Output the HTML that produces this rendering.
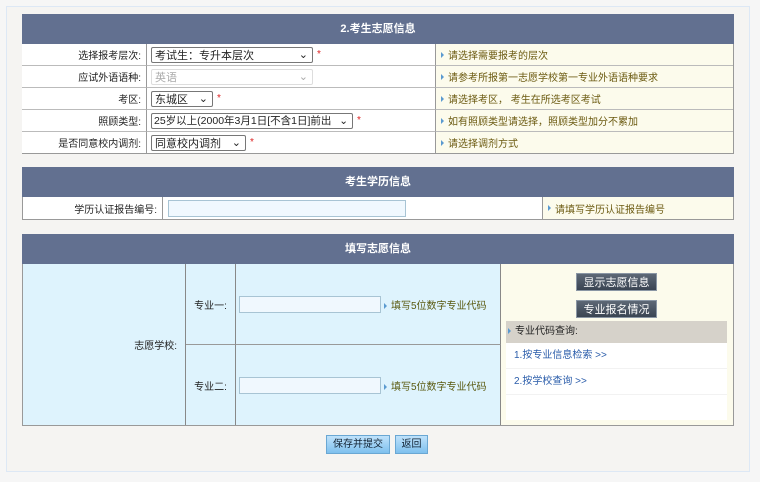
<!DOCTYPE html>
<html><head><meta charset="utf-8"><style>
*{margin:0;padding:0;box-sizing:border-box}
body{width:760px;height:482px;background:#f6f6f6;font-family:"Liberation Sans","Noto Sans CJK SC",sans-serif;font-size:10px;color:#222;position:relative;overflow:hidden}
.a{position:absolute}
.panel{left:6px;top:6px;width:744px;height:466px;background:#f5f4f2;border:1px solid #dde8f5}
.hd{background:#627090;color:#fff;font-weight:bold;font-size:11px;text-align:center}
.cell{border-right:1px solid #999;border-bottom:1px solid #bbb;display:flex;align-items:center;white-space:nowrap}
.lab{justify-content:flex-end;padding-right:5px;background:#fff}
.tip{background:#fcfbec;color:#6b5a10;padding-left:5px}
.tip:before{content:"";display:inline-block;width:0;height:0;border-left:3px solid #5a9ad0;border-top:3px solid transparent;border-bottom:3px solid transparent;margin-right:4px}
.sel{height:16px;border:1px solid #777;background:#fff;font-size:11px;padding-left:3px;display:flex;align-items:center;justify-content:space-between;padding-right:4px;border-radius:2px;white-space:nowrap;overflow:hidden}
.sel span:first-child{overflow:hidden}
.star{color:#d22;margin-left:4px}
.inp{background:#f0f8fe;border:1px solid #a8c4d4}
.gbtn{background:linear-gradient(#5d6876,#3a4452);color:#fff;font-size:11px;text-align:center;line-height:18px;border:1px solid #8a96a4}
.bbtn{background:linear-gradient(#bfe2fb,#7ec0ee);border:1px solid #6aa7d3;font-size:10px;text-align:center;line-height:18px;color:#123}
</style></head><body>
<div class="a panel"></div>
<div class="a" style="left:22px;top:14px;width:712px;height:140px;border:1px solid #999;border-top:none;background:#fff"></div>
<div class="a hd" style="left:22px;top:14px;width:712px;height:30px;line-height:30px">2.考生志愿信息</div>
<div class="a" style="left:22px;top:44px;width:711px;font-size:10px">
 <div style="display:flex;height:22px"><div class="cell lab" style="width:125px">选择报考层次:</div><div class="cell" style="width:289px;padding-left:4px;background:#fff"><div class="sel" style="width:162px"><span>考试生：专升本层次</span><span>⌄</span></div><span class="star">*</span></div><div class="cell tip" style="width:297px;border-right:none">请选择需要报考的层次</div></div>
 <div style="display:flex;height:22px"><div class="cell lab" style="width:125px">应试外语语种:</div><div class="cell" style="width:289px;padding-left:4px;background:#fff"><div class="sel" style="width:162px;color:#aaa;border-color:#ddd"><span>英语</span><span>⌄</span></div></div><div class="cell tip" style="width:297px;border-right:none">请参考所报第一志愿学校第一专业外语语种要求</div></div>
 <div style="display:flex;height:22px"><div class="cell lab" style="width:125px">考区:</div><div class="cell" style="width:289px;padding-left:4px;background:#fff"><div class="sel" style="width:62px"><span>东城区</span><span>⌄</span></div><span class="star">*</span></div><div class="cell tip" style="width:297px;border-right:none">请选择考区， 考生在所选考区考试</div></div>
 <div style="display:flex;height:22px"><div class="cell lab" style="width:125px">照顾类型:</div><div class="cell" style="width:289px;padding-left:4px;background:#fff"><div class="sel" style="width:202px;font-size:10.5px;padding-left:2px"><span>25岁以上(2000年3月1日[不含1日]前出</span><span>⌄</span></div><span class="star">*</span></div><div class="cell tip" style="width:297px;border-right:none">如有照顾类型请选择，照顾类型加分不累加</div></div>
 <div style="display:flex;height:21px"><div class="cell lab" style="width:125px;border-bottom:none">是否同意校内调剂:</div><div class="cell" style="width:289px;padding-left:4px;background:#fff;border-bottom:none"><div class="sel" style="width:95px"><span>同意校内调剂</span><span>⌄</span></div><span class="star">*</span></div><div class="cell tip" style="width:297px;border-bottom:none;border-right:none">请选择调剂方式</div></div>
</div>
<div class="a hd" style="left:22px;top:167px;width:712px;height:30px;line-height:30px">考生学历信息</div>
<div class="a" style="left:22px;top:197px;width:712px;height:23px;border:1px solid #999;border-top:none;display:flex">
 <div class="cell lab" style="width:140px;border-bottom:none">学历认证报告编号:</div>
 <div class="cell" style="width:380px;background:#fff;border-bottom:none;padding-left:5px"><div class="inp" style="width:238px;height:17px"></div></div>
 <div class="cell tip" style="width:190px;border:none">请填写学历认证报告编号</div>
</div>
<div class="a hd" style="left:22px;top:234px;width:712px;height:30px;line-height:30px">填写志愿信息</div>
<div class="a" style="left:22px;top:264px;width:712px;height:162px;border:1px solid #999;border-top:none;background:#def3fd"></div>
<div class="a" style="left:22px;top:264px;width:164px;height:161px;border-right:1px solid #888;display:flex;align-items:center;justify-content:flex-end;padding-right:8px">志愿学校:</div>
<div class="a" style="left:186px;top:264px;width:50px;height:81px;border-right:1px solid #888;border-bottom:1px solid #999;display:flex;align-items:center;justify-content:center">专业一:</div>
<div class="a" style="left:186px;top:345px;width:50px;height:80px;border-right:1px solid #888;display:flex;align-items:center;justify-content:center">专业二:</div>
<div class="a" style="left:236px;top:264px;width:265px;height:81px;border-right:1px solid #888;border-bottom:1px solid #999;display:flex;align-items:center;padding-left:3px"><div class="inp" style="width:142px;height:17px"></div><span class="tip" style="background:none;padding-left:3px;color:#5a5a10">填写5位数字专业代码</span></div>
<div class="a" style="left:236px;top:345px;width:265px;height:80px;border-right:1px solid #888;display:flex;align-items:center;padding-left:3px"><div class="inp" style="width:142px;height:17px"></div><span class="tip" style="background:none;padding-left:3px;color:#5a5a10">填写5位数字专业代码</span></div>
<div class="a" style="left:501px;top:264px;width:232px;height:161px;background:#fcfbec"></div>
<div class="a gbtn" style="left:576px;top:273px;width:81px;height:18px">显示志愿信息</div>
<div class="a gbtn" style="left:576px;top:300px;width:81px;height:18px">专业报名情况</div>
<div class="a tip" style="left:506px;top:321px;width:221px;height:22px;line-height:22px;background:#d6d2ca;color:#222;padding-left:2px">专业代码查询:</div>
<div class="a" style="left:506px;top:343px;width:221px;height:77px;background:#fff"></div>
<div class="a" style="left:506px;top:343px;width:221px;height:26px;line-height:26px;padding-left:8px;color:#2a5caa;border-bottom:1px solid #f2f2f2">1.按专业信息检索 &gt;&gt;</div>
<div class="a" style="left:506px;top:369px;width:221px;height:26px;line-height:26px;padding-left:8px;color:#2a5caa;border-bottom:1px solid #f2f2f2">2.按学校查询 &gt;&gt;</div>
<div class="a bbtn" style="left:326px;top:435px;width:64px;height:19px">保存并提交</div>
<div class="a bbtn" style="left:395px;top:435px;width:33px;height:19px">返回</div>
</body></html>
